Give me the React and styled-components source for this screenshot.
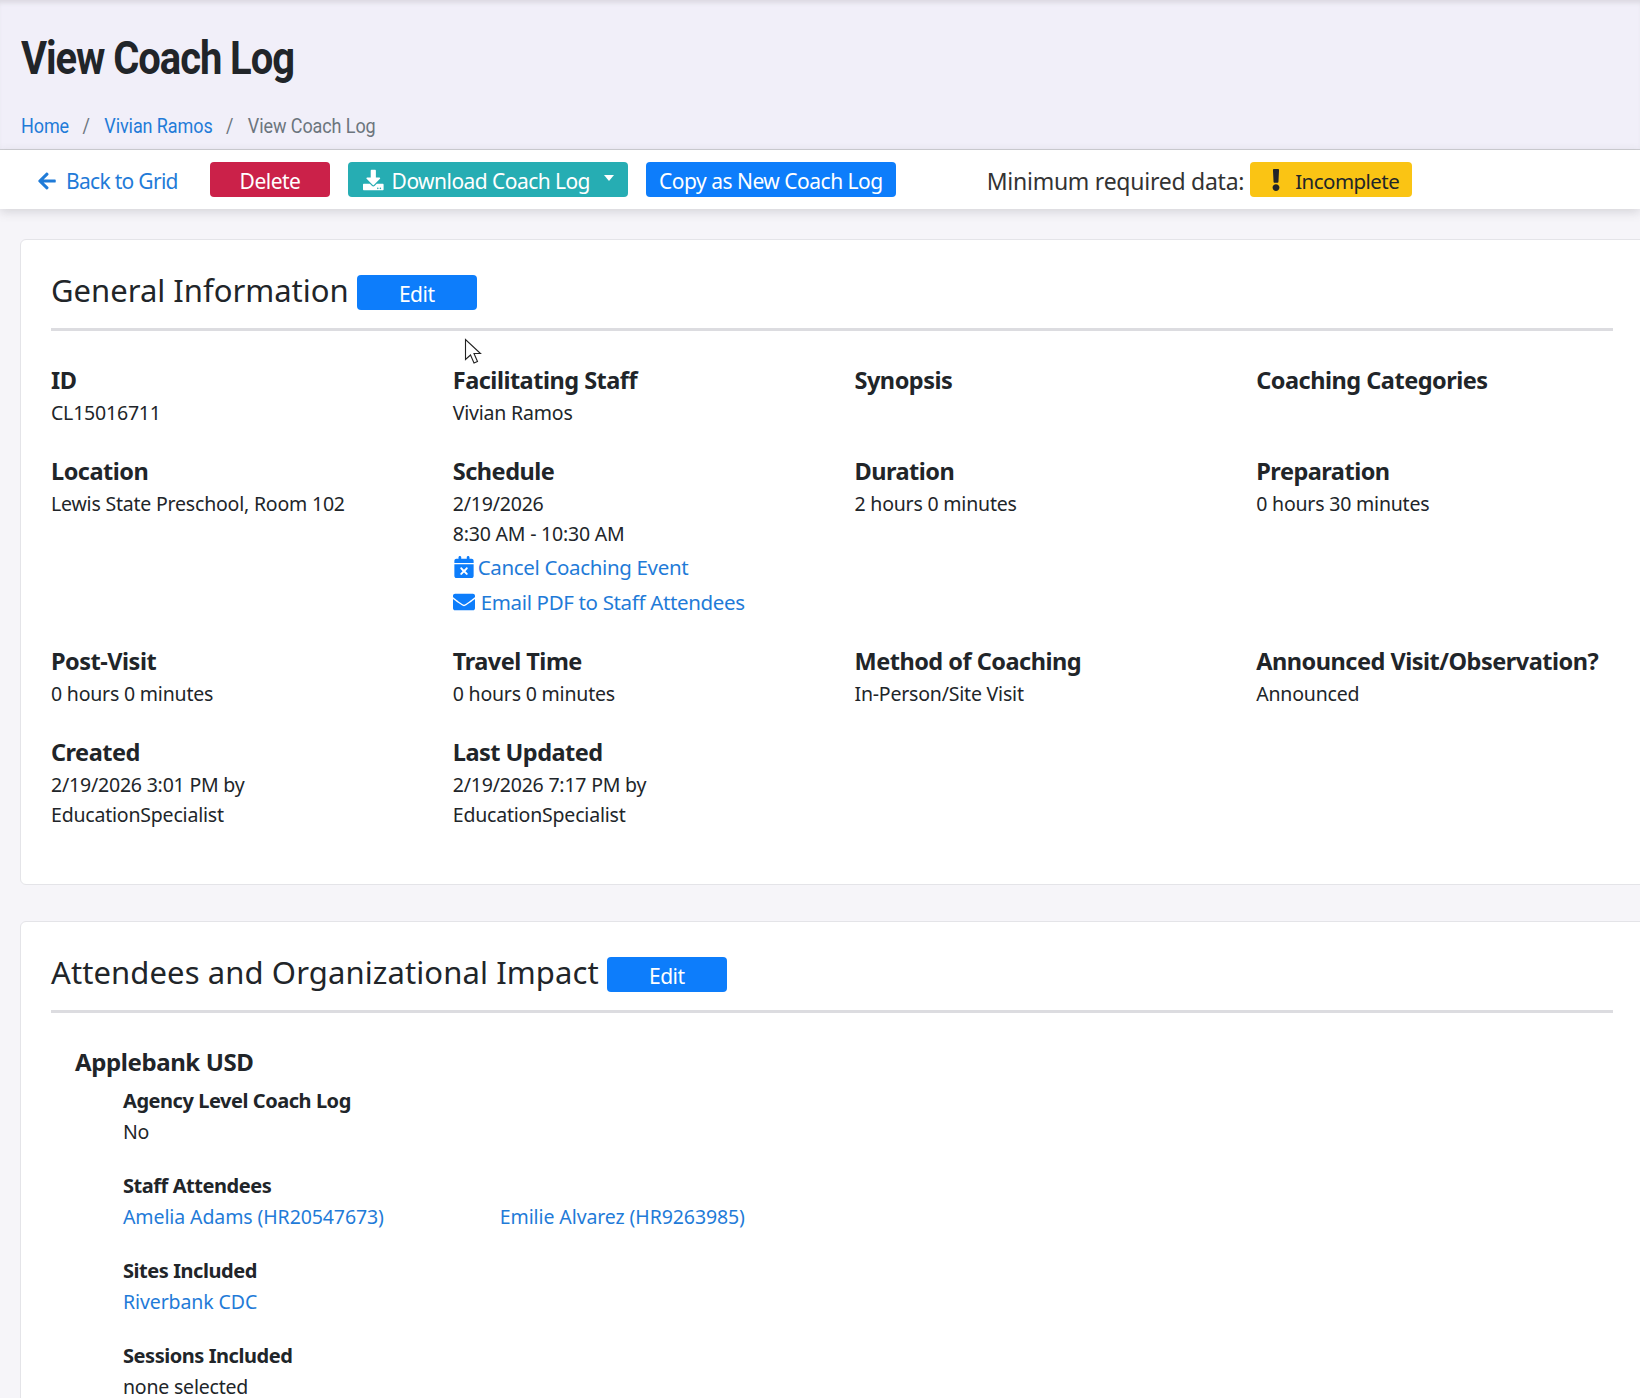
import React from 'react'
import styled, { createGlobalStyle } from 'styled-components'
import { FaArrowLeft, FaDownload, FaExclamation, FaEnvelope } from 'react-icons/fa'
import { FaCalendarXmark } from 'react-icons/fa6'

const GlobalStyle = createGlobalStyle`
    html, body {
        margin: 0;
        padding: 0;
        background: #f6f5f9;
        overflow: hidden;
        height: 1398px;
    }
    body {
        font-family: "Noto Sans", "Open Sans", sans-serif;
        color: #212529;
    }
`

const fields = [
    { label: 'ID', lines: ['CL15016711'] },
    { label: 'Facilitating Staff', lines: ['Vivian Ramos'] },
    { label: 'Synopsis', lines: [] },
    { label: 'Coaching Categories', lines: [] },
    { label: 'Location', lines: ['Lewis State Preschool, Room 102'] },
    { label: 'Schedule', lines: ['2/19/2026', '8:30 AM - 10:30 AM'], actions: true },
    { label: 'Duration', lines: ['2 hours 0 minutes'] },
    { label: 'Preparation', lines: ['0 hours 30 minutes'] },
    { label: 'Post-Visit', lines: ['0 hours 0 minutes'] },
    { label: 'Travel Time', lines: ['0 hours 0 minutes'] },
    { label: 'Method of Coaching', lines: ['In-Person/Site Visit'] },
    { label: 'Announced Visit/Observation?', lines: ['Announced'] },
    { label: 'Created', lines: ['2/19/2026 3:01 PM by', 'EducationSpecialist'] },
    { label: 'Last Updated', lines: ['2/19/2026 7:17 PM by', 'EducationSpecialist'] },
]

const App = () => {
    return (
        <Page>
            <GlobalStyle />
            <Header>
                <Title>View Coach Log</Title>
                <Crumbs>
                    <CrumbLink href="#">Home</CrumbLink>
                    <Slash>/</Slash>
                    <CrumbLink href="#">Vivian Ramos</CrumbLink>
                    <Slash>/</Slash>
                    <CrumbCurrent>View Coach Log</CrumbCurrent>
                </Crumbs>
            </Header>

            <Toolbar>
                <BackLink href="#"><FaArrowLeft size={20} />Back to Grid</BackLink>
                <DeleteButton $bg="#cb2149">Delete</DeleteButton>
                <DownloadButton $bg="#26adb3">
                    <FaDownload size={22} />
                    Download Coach Log
                    <Caret />
                </DownloadButton>
                <Button $bg="#0d7dfb">Copy as New Coach Log</Button>
                <StatusLabel>Minimum required data:</StatusLabel>
                <StatusBadge><FaExclamation size={22} />Incomplete</StatusBadge>
            </Toolbar>

            <Content>
                <FirstCard>
                    <CardHead>
                        <CardTitle>General Information</CardTitle>
                        <EditButton>Edit</EditButton>
                    </CardHead>
                    <Cursor viewBox="0 0 20 28">
                        <path d="M1.500 1.500v20l5-4.500 3.500 8 3.500-1.500-3.500-8h6.500z" fill="#fff" stroke="#222" strokeWidth="1.100" />
                    </Cursor>
                    <FieldGrid>
                        {fields.map((field) => (
                            <Field key={field.label}>
                                <FieldLabel>{field.label}</FieldLabel>
                                {field.lines.map((line) => (
                                    <FieldValue key={line}>{line}</FieldValue>
                                ))}
                                {field.actions && (
                                    <Actions>
                                        <ActionLink href="#" $gap="3px"><FaCalendarXmark size={22} />Cancel Coaching Event</ActionLink>
                                        <ActionLink href="#"><FaEnvelope size={22} />Email PDF to Staff Attendees</ActionLink>
                                    </Actions>
                                )}
                            </Field>
                        ))}
                    </FieldGrid>
                </FirstCard>

                <LastCard>
                    <CardHead>
                        <CardTitle $tracking="0.1px">Attendees and Organizational Impact</CardTitle>
                        <EditButton>Edit</EditButton>
                    </CardHead>
                    <Agency>
                        <AgencyName>Applebank USD</AgencyName>
                        <AgencyBody>
                            <SubField>
                                <SubLabel>Agency Level Coach Log</SubLabel>
                                <SubValue>No</SubValue>
                            </SubField>
                            <SubField>
                                <SubLabel>Staff Attendees</SubLabel>
                                <LinkRow>
                                    <SubLink href="#">Amelia Adams (HR20547673)</SubLink>
                                    <SubLink href="#">Emilie Alvarez (HR9263985)</SubLink>
                                </LinkRow>
                            </SubField>
                            <SubField>
                                <SubLabel>Sites Included</SubLabel>
                                <SubLink href="#">Riverbank CDC</SubLink>
                            </SubField>
                            <SubField>
                                <SubLabel>Sessions Included</SubLabel>
                                <SubValue>none selected</SubValue>
                            </SubField>
                        </AgencyBody>
                    </Agency>
                </LastCard>
            </Content>
        </Page>
    )
}

export default App

const Page = styled.div`
    width: 1640px;
    height: 1398px;
    overflow: hidden;
    background: #f6f5f9;
`

const Header = styled.header`
    height: 150px;
    box-sizing: border-box;
    padding: 32px 0 0 21px;
    background: #f1eff9;
    border-bottom: 1px solid #cfcfd4;
    box-shadow: inset 0 5px 4px -2px #dcdae2;
`

const Title = styled.h1`
    margin: 0;
    font-family: Roboto, sans-serif;
    font-size: 46px;
    line-height: 52px;
    font-weight: 700;
    letter-spacing: -1.2px;
    color: #212529;
    transform: scaleX(0.868);
    transform-origin: left center;
`

const Crumbs = styled.nav`
    display: flex;
    align-items: center;
    margin-top: 30px;
    font-family: Roboto, sans-serif;
    font-size: 20px;
    line-height: 24px;
    letter-spacing: -0.1px;
    transform: scaleX(0.9);
    transform-origin: left center;
`

const CrumbLink = styled.a`
    color: #1f7bd8;
    text-decoration: none;
`

const Slash = styled.span`
    margin: 0 16px 0 15px;
    color: #6c757d;
`

const CrumbCurrent = styled.span`
    color: #6c757d;
`

const Toolbar = styled.div`
    display: flex;
    align-items: center;
    height: 59px;
    box-sizing: border-box;
    padding: 0 0 0 37px;
    background: #fff;
    box-shadow: 0 3px 10px rgba(60, 60, 70, 0.18);
    position: relative;
    font-size: 21px;
`

const BackLink = styled.a`
    display: flex;
    align-items: center;
    gap: 9px;
    width: 173px;
    padding-top: 3px;
    color: #1f7bd8;
    text-decoration: none;
    letter-spacing: -0.7px;
`

const Button = styled.button`
    display: flex;
    align-items: center;
    justify-content: center;
    height: 35px;
    padding: 3px 13px 0;
    margin-right: 18px;
    border: none;
    border-radius: 4px;
    background: ${(props) => props.$bg};
    color: #fff;
    font-family: inherit;
    font-size: 21px;
    letter-spacing: -0.5px;
    white-space: nowrap;
`

const DeleteButton = styled(Button)`
    width: 120px;
`

const DownloadButton = styled(Button)`
    gap: 8px;
    width: 280px;
    padding: 3px 14px 0 15px;
    justify-content: flex-start;
    letter-spacing: -0.55px;

    svg {
        margin-top: -3px;
    }
`

const Caret = styled.span`
    width: 0;
    height: 0;
    margin: -7px 0 0 6px;
    border-left: 5px solid transparent;
    border-right: 5px solid transparent;
    border-top: 6px solid #fff;
`

const StatusLabel = styled.span`
    margin-left: 73px;
    padding-top: 3px;
    font-size: 23px;
    letter-spacing: -0.25px;
    color: #333;
`

const StatusBadge = styled.span`
    display: flex;
    align-items: center;
    gap: 8px;
    height: 35px;
    box-sizing: border-box;
    margin-left: 6px;
    padding: 3px 13px 0 15px;
    border-radius: 4px;
    background: #fac414;
    color: #212529;
    font-size: 20.5px;
    letter-spacing: -0.55px;

    svg {
        margin-top: -3px;
    }
`

const Content = styled.main`
    display: flex;
    flex-direction: column;
    gap: 36px;
    padding: 30px 0 0 20px;
`

const Card = styled.section`
    position: relative;
    width: 1630px;
    box-sizing: border-box;
    padding: 31px 36px 0 30px;
    background: #fff;
    border: 1px solid #e4e4e8;
    border-radius: 6px;
`

const FirstCard = styled(Card)`
    height: 646px;
`

const LastCard = styled(Card)`
    height: 600px;
`

const CardHead = styled.div`
    display: flex;
    align-items: center;
    gap: 8px;
    height: 39px;
    padding-bottom: 18px;
    border-bottom: 3px solid #dcdce0;
`

const CardTitle = styled.h2`
    margin: 0;
    font-size: 31px;
    line-height: 39px;
    font-weight: 400;
    letter-spacing: ${(props) => props.$tracking || '0'};
    color: #212529;
`

const EditButton = styled.button`
    width: 120px;
    height: 35px;
    margin-top: 4px;
    padding: 3px 0 0 0;
    border: none;
    border-radius: 4px;
    background: #0d7dfb;
    color: #fff;
    font-family: inherit;
    font-size: 21px;
    letter-spacing: -0.5px;
`

const Cursor = styled.svg`
    position: absolute;
    left: 443px;
    top: 98px;
    width: 20px;
    height: 28px;
`

const FieldGrid = styled.div`
    display: grid;
    grid-template-columns: repeat(4, 401.75px);
    padding-top: 33px;
`

const Field = styled.div`
    padding-bottom: 27px;
`

const FieldLabel = styled.div`
    padding-bottom: 2px;
    font-size: 23.5px;
    line-height: 32px;
    font-weight: 700;
    letter-spacing: -0.5px;
    color: #212529;
`

const FieldValue = styled.div`
    font-size: 19.5px;
    line-height: 30px;
    letter-spacing: -0.2px;
    color: #212529;
`

const Actions = styled.div`
    display: flex;
    flex-direction: column;
    margin-bottom: -1px;
    font-size: 20.5px;
`

const ActionLink = styled.a`
    display: flex;
    align-items: center;
    gap: ${(props) => props.$gap || '6px'};
    height: 35px;
    color: #1f7bd8;
    text-decoration: none;
    letter-spacing: -0.35px;

    svg {
        color: #0d7dfb;
    }
`

const Agency = styled.div`
    padding: 33px 0 0 24px;
`

const AgencyName = styled.h3`
    margin: 0;
    font-size: 24px;
    line-height: 32px;
    font-weight: 700;
    letter-spacing: -0.4px;
`

const AgencyBody = styled.div`
    display: flex;
    flex-direction: column;
    gap: 23px;
    padding: 7px 0 0 48px;
`

const SubField = styled.div`
    display: flex;
    flex-direction: column;
    align-items: flex-start;
`

const SubLabel = styled.div`
    font-size: 20px;
    line-height: 31px;
    font-weight: 700;
    letter-spacing: -0.45px;
`

const SubValue = styled.div`
    font-size: 19.5px;
    line-height: 31px;
    letter-spacing: -0.2px;
`

const LinkRow = styled.div`
    display: flex;
    gap: 116px;
`

const SubLink = styled.a`
    font-size: 19.5px;
    line-height: 31px;
    letter-spacing: -0.1px;
    color: #1f7bd8;
    text-decoration: none;
`
